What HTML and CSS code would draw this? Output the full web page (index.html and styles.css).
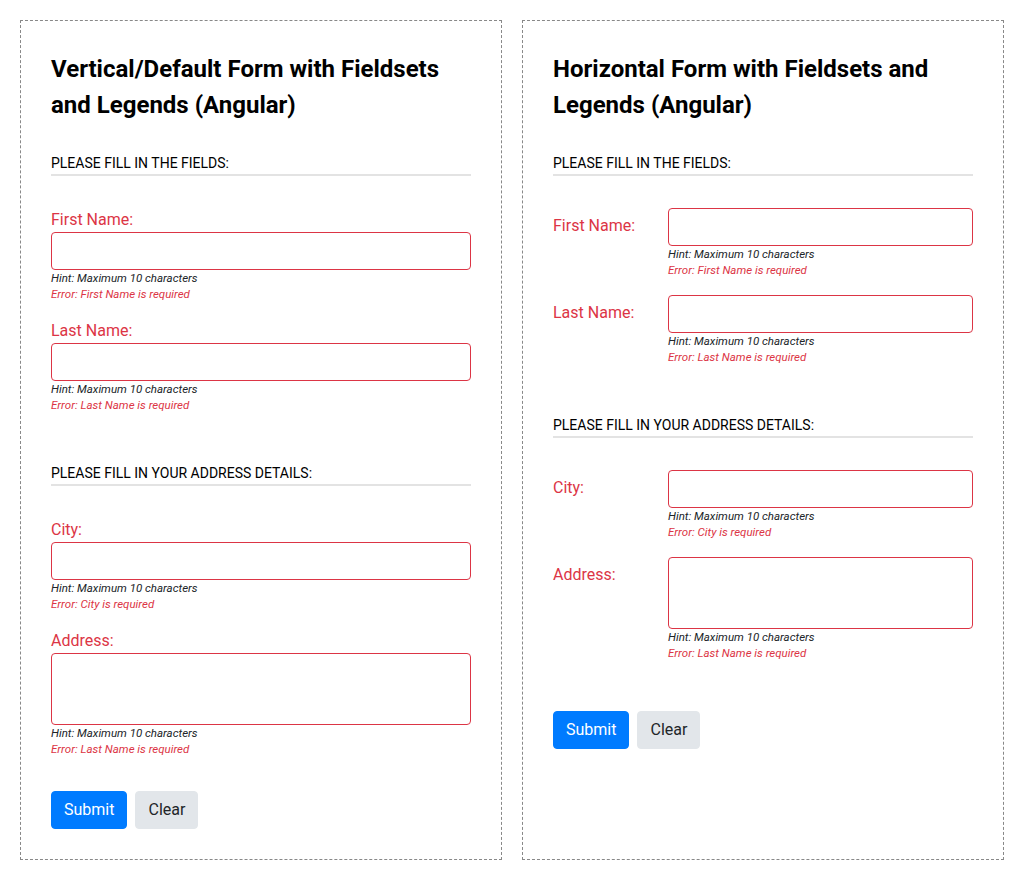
FILE: index.html
```html
<!DOCTYPE html>
<html>
<head>
<meta charset="utf-8">
<link rel="stylesheet" href="styles.css">
</head>
<body>
<div class="page">
  <div class="card">
    <h3 class="title">Vertical/Default Form with Fieldsets and Legends (Angular)</h3>
    <form class="form">
      <fieldset class="fs">
        <legend class="legend">PLEASE FILL IN THE FIELDS:</legend>
        <div class="group">
          <label class="label">First Name:</label>
          <input class="control" type="text">
          <div class="hint">Hint: Maximum 10 characters</div>
          <div class="error">Error: First Name is required</div>
        </div>
        <div class="group">
          <label class="label">Last Name:</label>
          <input class="control" type="text">
          <div class="hint">Hint: Maximum 10 characters</div>
          <div class="error">Error: Last Name is required</div>
        </div>
      </fieldset>
      <fieldset class="fs fs-last">
        <legend class="legend">PLEASE FILL IN YOUR ADDRESS DETAILS:</legend>
        <div class="group">
          <label class="label">City:</label>
          <input class="control" type="text">
          <div class="hint">Hint: Maximum 10 characters</div>
          <div class="error">Error: City is required</div>
        </div>
        <div class="group">
          <label class="label">Address:</label>
          <textarea class="control area"></textarea>
          <div class="hint">Hint: Maximum 10 characters</div>
          <div class="error">Error: Last Name is required</div>
        </div>
      </fieldset>
      <div class="actions">
        <button type="button" class="btn btn-primary">Submit</button>
        <button type="button" class="btn btn-light">Clear</button>
      </div>
    </form>
  </div>
  <div class="card">
    <h3 class="title">Horizontal Form with Fieldsets and Legends (Angular)</h3>
    <form class="form">
      <fieldset class="fs">
        <legend class="legend">PLEASE FILL IN THE FIELDS:</legend>
        <div class="row">
          <label class="label hlabel">First Name:</label>
          <div class="col">
            <input class="control" type="text">
            <div class="hint">Hint: Maximum 10 characters</div>
            <div class="error">Error: First Name is required</div>
          </div>
        </div>
        <div class="row">
          <label class="label hlabel">Last Name:</label>
          <div class="col">
            <input class="control" type="text">
            <div class="hint">Hint: Maximum 10 characters</div>
            <div class="error">Error: Last Name is required</div>
          </div>
        </div>
      </fieldset>
      <fieldset class="fs fs-last">
        <legend class="legend">PLEASE FILL IN YOUR ADDRESS DETAILS:</legend>
        <div class="row">
          <label class="label hlabel">City:</label>
          <div class="col">
            <input class="control" type="text">
            <div class="hint">Hint: Maximum 10 characters</div>
            <div class="error">Error: City is required</div>
          </div>
        </div>
        <div class="row">
          <label class="label hlabel">Address:</label>
          <div class="col">
            <textarea class="control area"></textarea>
            <div class="hint">Hint: Maximum 10 characters</div>
            <div class="error">Error: Last Name is required</div>
          </div>
        </div>
      </fieldset>
      <div class="actions actions-h">
        <button type="button" class="btn btn-primary">Submit</button>
        <button type="button" class="btn btn-light">Clear</button>
      </div>
    </form>
  </div>
</div>
</body>
</html>
```
FILE: styles.css
```css
* { box-sizing: border-box; }
html, body { margin: 0; padding: 0; background: #fff; }
body {
  font-family: Roboto, "Liberation Sans", Arial, sans-serif;
  color: #212529;
  font-size: 16px;
  line-height: 1.5;
}
.page {
  display: flex;
  gap: 20px;
  padding: 20px;
  align-items: stretch;
}
.card {
  flex: 1 1 0;
  border: 1px dashed #888;
  padding: 30px;
}
.title {
  margin: 0 0 30px 0;
  font-size: 24px;
  line-height: 36px;
  font-weight: 700;
  color: #000;
}
.form { margin: 0; }
.fs {
  border: 0;
  margin: 0 0 33px 0;
  padding: 0;
  min-width: 0;
}
.fs-last { margin-bottom: 0; }
.legend {
  display: block;
  width: 100%;
  padding: 0;
  font-size: 14px;
  line-height: 21px;
  color: #000;
  border-bottom: 2px solid #e3e3e3;
  margin-bottom: 32px;
}
.group { margin-bottom: 17px; }
.label {
  display: block;
  color: #dc3545;
  font-size: 16px;
  line-height: 24px;
}
.control {
  display: block;
  width: 100%;
  height: 38px;
  margin: 0;
  padding: 6px 12px;
  font-family: inherit;
  font-size: 16px;
  border: 1px solid #dc3545;
  border-radius: 4px;
  background: #fff;
  resize: none;
}
.area { height: 72px; }
.hint {
  font-size: 11.5px;
  line-height: 16px;
  font-style: italic;
  color: #212529;
}
.error {
  font-size: 11.5px;
  line-height: 16px;
  font-style: italic;
  color: #dc3545;
}
.row {
  display: grid;
  grid-template-columns: 115px 1fr;
  margin-bottom: 17px;
}
.hlabel { padding-top: 6px; }
.actions {
  display: flex;
  gap: 8px;
  margin-top: 17px;
}
.actions-h { margin-top: 33px; }
.btn {
  height: 38px;
  padding: 6px 12px;
  font-family: inherit;
  font-size: 16px;
  line-height: 24px;
  border: 1px solid transparent;
  border-radius: 4px;
}
.btn-primary { background: #007bff; border-color: #007bff; color: #fff; }
.btn-light { background: #e2e6ea; border-color: #e2e6ea; color: #212529; }
```
